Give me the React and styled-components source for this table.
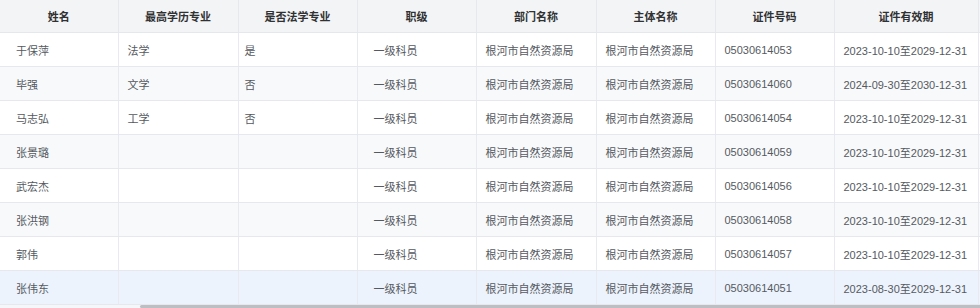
import React from "react";
import styled, { createGlobalStyle } from "styled-components";

const GlobalStyle = createGlobalStyle`
  html, body {
    margin: 0;
    padding: 0;
    background: #fff;
  }
  body {
    font-family: "Liberation Sans", "Noto Sans CJK SC", Arial, sans-serif;
  }
`;

const Wrapper = styled.div`
  width: 980px;
  height: 308px;
  overflow: hidden;
  display: flex;
  flex-direction: column;
`;

const TableBox = styled.div`
  width: 980px;
  height: 305px;
  overflow: hidden;
`;

const Table = styled.table`
  table-layout: fixed;
  border-collapse: collapse;
  width: 1128px;
  font-size: 11px;
`;

const HeadCell = styled.th`
  height: 32px;
  padding: 0;
  background: #f3f4f6;
  color: #303133;
  font-weight: bold;
  text-align: center;
  border-right: 1px solid #e6e8ed;
  border-bottom: 1px solid #e4e7ec;
  white-space: nowrap;
  ${(p) =>
    p.$fixed &&
    `
    position: relative;
    z-index: 2;
    box-shadow: 3px 0 5px -1px rgba(0, 0, 0, 0.1);
  `}
`;

const Row = styled.tr`
  background: ${(p) => (p.$hover ? "#edf3fd" : p.$stripe ? "#f8f9fb" : "#fff")};
`;

const Cell = styled.td`
  height: 33px;
  padding: 0 0 0 ${(p) => p.$pad || 9}px;
  color: #555a61;
  text-align: left;
  border-right: 1px solid #e8eaef;
  border-bottom: 1px solid #e6e8ed;
  white-space: nowrap;
  overflow: hidden;
  ${(p) =>
    p.$fixed &&
    `
    position: relative;
    z-index: 2;
    background: inherit;
    box-shadow: 3px 0 5px -1px rgba(0, 0, 0, 0.1);
  `}
`;

const ScrollTrack = styled.div`
  height: 3px;
  background: #f4f6f9;
  display: flex;
`;

const ScrollThumb = styled.div`
  margin-left: 140px;
  flex: 1;
  background: #bcbec4;
  border-radius: 2px 0 0 2px;
`;

const columns = [
  { key: "name", title: "姓名", width: 118, pad: 16 },
  { key: "major", title: "最高学历专业", width: 120, pad: 9 },
  { key: "law", title: "是否法学专业", width: 119, pad: 6 },
  { key: "rank", title: "职级", width: 119, pad: 16 },
  { key: "dept", title: "部门名称", width: 120, pad: 9 },
  { key: "org", title: "主体名称", width: 119, pad: 9 },
  { key: "cert", title: "证件号码", width: 119, pad: 9 },
  { key: "period", title: "证件有效期", width: 144, pad: 9 },
  { key: "extra", title: "", width: 150, pad: 9 },
];

const base = { rank: "一级科员", dept: "根河市自然资源局", org: "根河市自然资源局", extra: "" };

const rows = [
  { ...base, name: "于保萍", major: "法学", law: "是", cert: "05030614053", period: "2023-10-10至2029-12-31" },
  { ...base, name: "毕强", major: "文学", law: "否", cert: "05030614060", period: "2024-09-30至2030-12-31" },
  { ...base, name: "马志弘", major: "工学", law: "否", cert: "05030614054", period: "2023-10-10至2029-12-31" },
  { ...base, name: "张景璐", major: "", law: "", cert: "05030614059", period: "2023-10-10至2029-12-31" },
  { ...base, name: "武宏杰", major: "", law: "", cert: "05030614056", period: "2023-10-10至2029-12-31" },
  { ...base, name: "张洪钢", major: "", law: "", cert: "05030614058", period: "2023-10-10至2029-12-31" },
  { ...base, name: "郭伟", major: "", law: "", cert: "05030614057", period: "2023-10-10至2029-12-31" },
  { ...base, name: "张伟东", major: "", law: "", cert: "05030614051", period: "2023-08-30至2029-12-31" },
];

export default function App() {
  return (
    <Wrapper>
      <GlobalStyle />
      <TableBox>
        <Table>
          <colgroup>
            {columns.map((c) => (
              <col key={c.key} style={{ width: c.width }} />
            ))}
          </colgroup>
          <thead>
            <tr>
              {columns.map((c, i) => (
                <HeadCell key={c.key} $fixed={i === 0}>
                  {c.title}
                </HeadCell>
              ))}
            </tr>
          </thead>
          <tbody>
            {rows.map((r, idx) => (
              <Row key={r.cert} $stripe={idx % 2 === 1} $hover={idx === rows.length - 1}>
                {columns.map((c, i) => (
                  <Cell key={c.key} $pad={c.pad} $fixed={i === 0}>
                    {r[c.key]}
                  </Cell>
                ))}
              </Row>
            ))}
          </tbody>
        </Table>
      </TableBox>
      <ScrollTrack>
        <ScrollThumb />
      </ScrollTrack>
    </Wrapper>
  );
}
